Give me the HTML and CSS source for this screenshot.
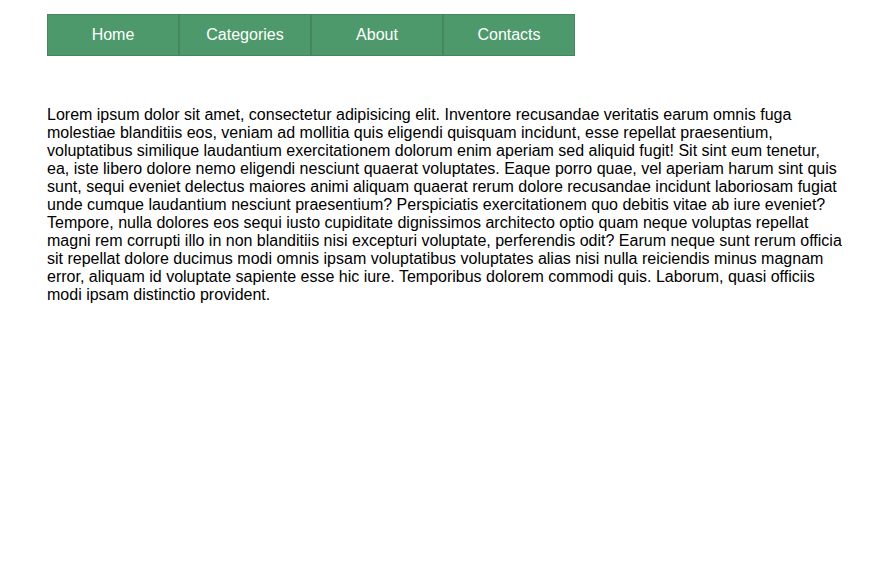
FILE: index.html
```html
<!DOCTYPE html>
<html>
<head>
<meta charset="utf-8">
<link rel="stylesheet" href="styles.css">
</head>
<body>
<div class="wrap">
  <nav class="menu">
    <a class="item" href="#">Home</a>
    <a class="item" href="#">Categories</a>
    <a class="item" href="#">About</a>
    <a class="item" href="#">Contacts</a>
  </nav>
  <p class="text">Lorem ipsum dolor sit amet, consectetur adipisicing elit. Inventore recusandae veritatis earum omnis fuga molestiae blanditiis eos, veniam ad mollitia quis eligendi quisquam incidunt, esse repellat praesentium, voluptatibus similique laudantium exercitationem dolorum enim aperiam sed aliquid fugit! Sit sint eum tenetur, ea, iste libero dolore nemo eligendi nesciunt quaerat voluptates. Eaque porro quae, vel aperiam harum sint quis sunt, sequi eveniet delectus maiores animi aliquam quaerat rerum dolore recusandae incidunt laboriosam fugiat unde cumque laudantium nesciunt praesentium? Perspiciatis exercitationem quo debitis vitae ab iure eveniet? Tempore, nulla dolores eos sequi iusto cupiditate dignissimos architecto optio quam neque voluptas repellat magni rem corrupti illo in non blanditiis nisi excepturi voluptate, perferendis odit? Earum neque sunt rerum officia sit repellat dolore ducimus modi omnis ipsam voluptatibus voluptates alias nisi nulla reiciendis minus magnam error, aliquam id voluptate sapiente esse hic iure. Temporibus dolorem commodi quis. Laborum, quasi officiis modi ipsam distinctio provident.</p>
</div>
</body>
</html>
```
FILE: styles.css
```css
body {
  margin: 8px;
  font-family: "Liberation Sans", Arial, sans-serif;
  font-size: 16px;
  color: #000;
  background: #fff;
}
.wrap {
  width: 798px;
  margin-left: 39px;
  padding-top: 6px;
}
.menu {
  display: flex;
  width: 528px;
}
.item {
  width: 132px;
  height: 42px;
  box-sizing: border-box;
  display: flex;
  align-items: center;
  justify-content: center;
  background: #4d996b;
  border: 1px solid #46865e;
  color: #fff;
  text-decoration: none;
  font-size: 16px;
}
.text {
  margin: 50px 0 0;
  line-height: 18px;
}
```
